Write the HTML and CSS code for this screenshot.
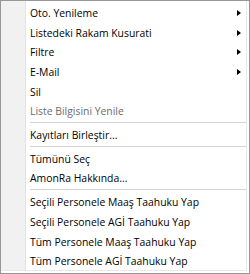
FILE: index.html
```html
<!DOCTYPE html>
<html lang="tr">
<head>
  <meta charset="UTF-8" />
  <title>Menü</title>
  <link rel="stylesheet" href="styles.css">
</head>
<body>
  <div class="menu">
    <div class="item sub"><span>Oto. Yenileme</span><i class="arrow"></i></div>
    <div class="item sub"><span>Listedeki Rakam Kusurati</span><i class="arrow"></i></div>
    <div class="item sub"><span>Filtre</span><i class="arrow"></i></div>
    <div class="item sub"><span>E-Mail</span><i class="arrow"></i></div>
    <div class="item"><span>Sil</span></div>
    <div class="item disabled"><span>Liste Bilgisini Yenile</span></div>
    <div class="sep"></div>
    <div class="item"><span>Kayıtları Birleştir...</span></div>
    <div class="sep"></div>
    <div class="item"><span>Tümünü Seç</span></div>
    <div class="item"><span>AmonRa Hakkında...</span></div>
    <div class="sep"></div>
    <div class="item"><span>Seçili Personele Maaş Taahuku Yap</span></div>
    <div class="item"><span>Seçili Personele AGİ Taahuku Yap</span></div>
    <div class="item"><span>Tüm Personele Maaş Taahuku Yap</span></div>
    <div class="item"><span>Tüm Personele AGİ Taahuku Yap</span></div>
  </div>
</body>
</html>
```

FILE: styles.css
```css
* {
  box-sizing: border-box;
  margin: 0;
  padding: 0;
}

body {
  background: #fff;
  font-family: 'Open Sans', 'Noto Sans', sans-serif;
}

.menu {
  width: 250px;
  height: 274px;
  border: 1px solid #979797;
  box-shadow: inset -2px -2px 0 #fff, inset -3px -3px 0 #e8e8e8;
  background: linear-gradient(to right, #f1f1f1 0, #f1f1f1 24px, #e2e3e3 24px, #e2e3e3 25px, #fff 25px);
  padding: 2px 3px 2px 2px;
  display: flex;
  flex-direction: column;
}

.item {
  height: 20px;
  display: flex;
  align-items: center;
  justify-content: space-between;
  padding: 0 5px 0 27px;
  font-size: 10.4px;
  color: #000;
}

.item.disabled {
  color: #6d6d6d;
}

.arrow {
  width: 0;
  height: 0;
  border-top: 3.5px solid transparent;
  border-bottom: 3.5px solid transparent;
  border-left: 4px solid #000;
}

.sep {
  height: 3px;
  margin-left: 27px;
  border-top: 1px solid #d4d4d4;
  border-bottom: 1px solid #fff;
  margin-top: 1px;
}
```
